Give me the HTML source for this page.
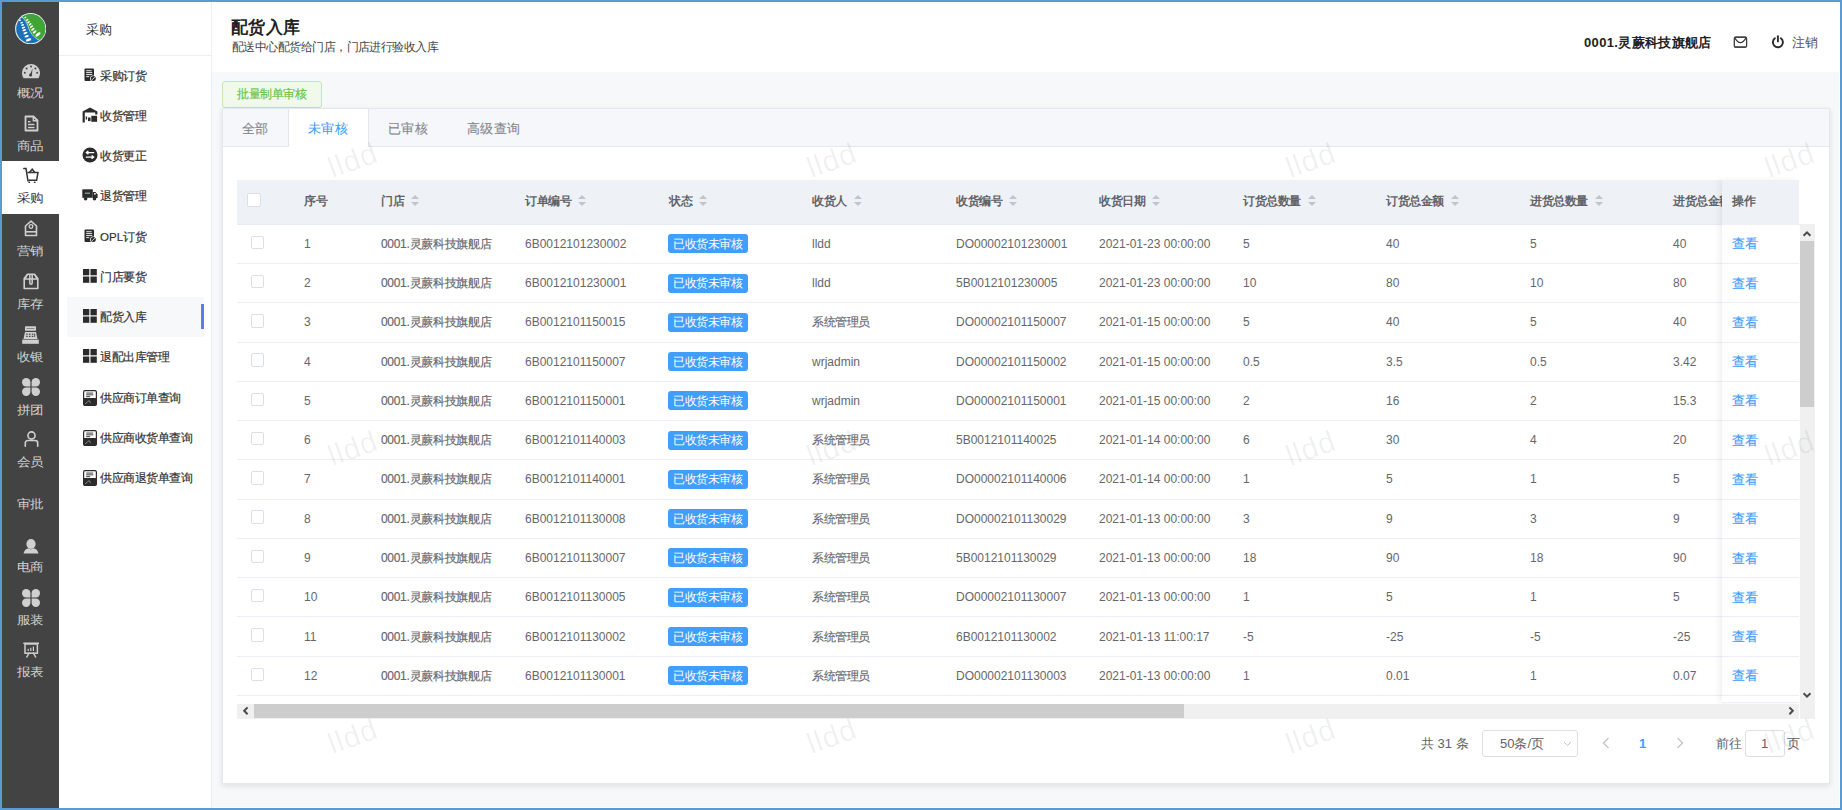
<!DOCTYPE html><html><head><meta charset="utf-8"><style>
*{box-sizing:border-box}
html,body{margin:0;padding:0}
body{width:1842px;height:810px;overflow:hidden;position:relative;background:#5b9bd5;font-family:"Liberation Sans",sans-serif;}
.abs{position:absolute}
.s{transform:scale(.96);transform-origin:0 0}
.t{position:absolute;white-space:nowrap;line-height:1}
#inner{position:absolute;left:2px;top:2px;width:1838px;height:806px;background:#fff}
#side{position:absolute;left:2px;top:2px;width:57px;height:806px;background:#434343}
.si{position:absolute;left:2px;width:57px;height:53px}
.si .lb{position:absolute;left:0;width:57px;text-align:center;font-size:14px;color:#cfcfcf;line-height:1}
.si.act{background:#fff}
.si.act .lb{color:#333}
#sub{position:absolute;left:59px;top:2px;width:153px;height:806px;background:#fff;border-right:1px solid #eceef2}
.mi{position:absolute;left:100px;font-size:12px;color:#333;line-height:1;white-space:nowrap;-webkit-text-stroke:0.2px #333}
.mic{position:absolute;left:83px}
#hdr{position:absolute;left:212px;top:2px;width:1627px;height:70px;background:#fff}
#main{position:absolute;left:212px;top:72px;width:1627px;height:735px;background:#f7f8fa}
#card{position:absolute;left:222px;top:108px;width:1608px;height:676px;background:#fff;border:1px solid #e4e7ed;box-shadow:0 2px 6px rgba(0,0,0,.10)}
.th{position:absolute;font-size:12px;font-weight:bold;color:#606266;line-height:1;white-space:nowrap}
.td{position:absolute;font-size:12px;color:#65676b;line-height:1;white-space:nowrap}
.cs{-webkit-text-stroke:0.15px currentColor}
.sc{position:absolute;width:10px;height:12px}
.sc i{position:absolute;left:0;width:0;height:0;border-left:4.7px solid transparent;border-right:4.7px solid transparent}
.sc .up{top:0;border-bottom:4.6px solid #c0c4cc}
.sc .dn{top:6.6px;border-top:4.7px solid #c0c4cc}
.cb{position:absolute;width:13.5px;height:13.5px;border:1px solid #dcdfe6;border-radius:2px;background:#fff}
.tag{position:absolute;height:19px;width:80.2px;background:#409eff;border-radius:3px;color:#fff;font-size:12px;line-height:20px;text-align:center;white-space:nowrap}
.rl{position:absolute;height:1px;background:#ebeef5}
.lk{position:absolute;font-size:14px;color:#409eff;line-height:1;white-space:nowrap;-webkit-text-stroke:0.15px #409eff}
.wm{position:absolute;font-size:30px;letter-spacing:1px;color:rgba(0,0,0,0.062);transform:rotate(-20deg);transform-origin:0 0;line-height:1;white-space:nowrap;pointer-events:none}
</style></head><body>
<div id="inner"></div>
<div id="side"></div>
<svg class="abs" style="left:14.8px;top:13px" width="31.4" height="31.4" viewBox="0 0 31.4 31.4">
<circle cx="15.7" cy="15.7" r="15.6" fill="#e6eee6"/>
<circle cx="15.7" cy="15.7" r="14.5" fill="#1b70ba"/>
<path d="M7.0 4.0 C9.8 6.5 11.7 9.4 12.7 12.5 C14 16.5 15.5 20.5 19.7 24.2 C21.2 25.5 22.6 26.5 24.5 27.3 A14.5 14.5 0 1 0 7.0 4.0 Z" fill="#40a535"/>
<path d="M7.0 4.0 C9.8 6.5 11.7 9.4 12.7 12.5 C14 16.5 15.5 20.5 19.7 24.2 C21.2 25.5 22.6 26.5 24.5 27.3" fill="none" stroke="#fff" stroke-width="0.6"/>
<g fill="#fff"><ellipse cx="10.35" cy="4.5" rx="1.2" ry="0.7" transform="rotate(-38 10.35 4.5)"/><ellipse cx="12.2" cy="6.86" rx="1.4" ry="0.75" transform="rotate(-38 12.2 6.86)"/><ellipse cx="13.6" cy="9.2" rx="1.55" ry="0.8" transform="rotate(-38 13.6 9.2)"/><ellipse cx="15.0" cy="11.3" rx="1.7" ry="0.85" transform="rotate(-38 15.0 11.3)"/><ellipse cx="16.45" cy="13.6" rx="1.85" ry="0.9" transform="rotate(-38 16.45 13.6)"/><ellipse cx="17.9" cy="16.3" rx="2.0" ry="0.95" transform="rotate(-38 17.9 16.3)"/><ellipse cx="19.6" cy="18.9" rx="2.2" ry="1.0" transform="rotate(-38 19.6 18.9)"/><ellipse cx="23.0" cy="21.4" rx="3.0" ry="1.4" transform="rotate(-38 23.0 21.4)"/><ellipse cx="5.0" cy="7.3" rx="1.1" ry="0.65" transform="rotate(-18 5.0 7.3)"/><ellipse cx="6.6" cy="9.7" rx="1.4" ry="0.75" transform="rotate(-18 6.6 9.7)"/><ellipse cx="7.6" cy="12.0" rx="1.6" ry="0.8" transform="rotate(-18 7.6 12.0)"/><ellipse cx="8.5" cy="14.6" rx="1.8" ry="0.85" transform="rotate(-18 8.5 14.6)"/><ellipse cx="9.3" cy="17.2" rx="1.95" ry="0.9" transform="rotate(-18 9.3 17.2)"/><ellipse cx="10.5" cy="20.0" rx="2.1" ry="0.95" transform="rotate(-18 10.5 20.0)"/><ellipse cx="11.7" cy="23.3" rx="2.2" ry="1.0" transform="rotate(-18 11.7 23.3)"/><ellipse cx="13.6" cy="26.8" rx="2.8" ry="1.3" transform="rotate(-18 13.6 26.8)"/></g>
</svg>
<div class="si" style="top:55px"></div>
<div class="si" style="top:107.5px"></div>
<div class="si act" style="top:160.5px"></div>
<div class="si" style="top:214px"></div>
<div class="si" style="top:267px"></div>
<div class="si" style="top:320px"></div>
<div class="si" style="top:373px"></div>
<div class="si" style="top:426px"></div>
<div class="si" style="top:479px"></div>
<div class="si" style="top:532px"></div>
<div class="si" style="top:585px"></div>
<div class="si" style="top:638px"></div>
<div class="t" style="left:17px;top:87px;font-size:14px;color:#d2d2d2;transform:scale(.96,.85);transform-origin:0 0">概况</div>
<div class="t" style="left:17px;top:140px;font-size:14px;color:#d2d2d2;transform:scale(.96,.85);transform-origin:0 0">商品</div>
<div class="t" style="left:17px;top:192px;font-size:14px;color:#333;transform:scale(.96,.85);transform-origin:0 0">采购</div>
<div class="t" style="left:17px;top:245px;font-size:14px;color:#d2d2d2;transform:scale(.96,.85);transform-origin:0 0">营销</div>
<div class="t" style="left:17px;top:298px;font-size:14px;color:#d2d2d2;transform:scale(.96,.85);transform-origin:0 0">库存</div>
<div class="t" style="left:17px;top:351px;font-size:14px;color:#d2d2d2;transform:scale(.96,.85);transform-origin:0 0">收银</div>
<div class="t" style="left:17px;top:404px;font-size:14px;color:#d2d2d2;transform:scale(.96,.85);transform-origin:0 0">拼团</div>
<div class="t" style="left:17px;top:456px;font-size:14px;color:#d2d2d2;transform:scale(.96,.85);transform-origin:0 0">会员</div>
<div class="t" style="left:17px;top:498px;font-size:14px;color:#d2d2d2;transform:scale(.96,.85);transform-origin:0 0">审批</div>
<div class="t" style="left:17px;top:561px;font-size:14px;color:#d2d2d2;transform:scale(.96,.85);transform-origin:0 0">电商</div>
<div class="t" style="left:17px;top:614px;font-size:14px;color:#d2d2d2;transform:scale(.96,.85);transform-origin:0 0">服装</div>
<div class="t" style="left:17px;top:666px;font-size:14px;color:#d2d2d2;transform:scale(.96,.85);transform-origin:0 0">报表</div>
<div id="sub"></div>
<div class="abs" style="left:59px;top:55px;width:152px;height:1px;background:#eceef2"></div>
<div class="t s" style="left:86px;top:22px;font-size:14px;color:#333">采购</div>
<div class="mi s" style="top:69.5px">采购订货</div>
<div class="mi s" style="top:109.75px">收货管理</div>
<div class="mi s" style="top:150.0px">收货更正</div>
<div class="mi s" style="top:190.25px">退货管理</div>
<div class="mi s" style="top:230.5px">OPL订货</div>
<div class="mi s" style="top:270.75px">门店要货</div>
<div class="abs" style="left:67px;top:297px;width:137px;height:40px;background:#f7f8fa"></div>
<div class="abs" style="left:201px;top:304px;width:3px;height:25px;background:#5a7cf0"></div>
<div class="mi s" style="top:311.0px">配货入库</div>
<div class="mi s" style="top:351.25px">退配出库管理</div>
<div class="mi s" style="top:391.5px">供应商订单查询</div>
<div class="mi s" style="top:431.75px">供应商收货单查询</div>
<div class="mi s" style="top:472.0px">供应商退货单查询</div>
<div id="hdr"></div>
<div class="t s" style="left:231px;top:18.5px;font-size:18px;font-weight:bold;color:#222">配货入库</div>
<div class="t" style="left:232px;top:40.5px;font-size:12px;letter-spacing:-0.55px;color:#444">配送中心配货给门店，门店进行验收入库</div>
<div class="t" style="left:1584px;top:36px;font-size:13px;letter-spacing:0.35px;font-weight:bold;color:#222">0001.灵蕨科技旗舰店</div>
<div class="t s" style="left:1792px;top:35px;font-size:14px;color:#555">注销</div>
<div id="main"></div>
<div class="abs" style="left:222px;top:81px;width:100px;height:27px;background:#f0f9eb;border:1px solid #c2e7b0;border-radius:3px"></div>
<div class="t s" style="left:237px;top:88px;font-size:12px;color:#67c23a;-webkit-text-stroke:0.15px #67c23a">批量制单审核</div>
<div id="card"></div>
<div class="abs" style="left:223px;top:109px;width:1606px;height:38px;background:#f5f7fa;border-bottom:1px solid #e4e7ed"></div>
<div class="abs" style="left:288px;top:109px;width:81px;height:37.5px;background:#fff;border-left:1px solid #e4e7ed;border-right:1px solid #e4e7ed"></div>
<div class="abs" style="left:289px;top:146px;width:79px;height:1px;background:#fff"></div>
<div class="t s" style="left:242px;top:120.5px;font-size:14px;color:#85888e;-webkit-text-stroke:0.15px #85888e">全部</div>
<div class="t s" style="left:308px;top:120.5px;font-size:14px;color:#409eff;-webkit-text-stroke:0.1px #409eff">未审核</div>
<div class="t s" style="left:388px;top:120.5px;font-size:14px;color:#85888e;-webkit-text-stroke:0.15px #85888e">已审核</div>
<div class="t s" style="left:467px;top:120.5px;font-size:14px;color:#85888e;-webkit-text-stroke:0.15px #85888e">高级查询</div>
<div class="abs" style="left:237px;top:180.3px;width:1562px;height:44.4px;background:#eef1f6"></div>
<div class="abs" style="left:237px;top:223.7px;width:1578px;height:1px;background:#e6eaf3"></div>
<div class="cb" style="left:247.1px;top:193.3px"></div>
<div class="th s" style="left:304px;top:194.7px">序号</div>
<div class="th s" style="left:381px;top:194.7px">门店</div>
<div class="sc" style="left:411.04px;top:195.4px"><i class="up"></i><i class="dn"></i></div>
<div class="th s" style="left:525px;top:194.7px">订单编号</div>
<div class="sc" style="left:578.08px;top:195.4px"><i class="up"></i><i class="dn"></i></div>
<div class="th s" style="left:669px;top:194.7px">状态</div>
<div class="sc" style="left:699.04px;top:195.4px"><i class="up"></i><i class="dn"></i></div>
<div class="th s" style="left:812px;top:194.7px">收货人</div>
<div class="sc" style="left:853.56px;top:195.4px"><i class="up"></i><i class="dn"></i></div>
<div class="th s" style="left:956px;top:194.7px">收货编号</div>
<div class="sc" style="left:1009.08px;top:195.4px"><i class="up"></i><i class="dn"></i></div>
<div class="th s" style="left:1099px;top:194.7px">收货日期</div>
<div class="sc" style="left:1152.08px;top:195.4px"><i class="up"></i><i class="dn"></i></div>
<div class="th s" style="left:1243px;top:194.7px">订货总数量</div>
<div class="sc" style="left:1307.6px;top:195.4px"><i class="up"></i><i class="dn"></i></div>
<div class="th s" style="left:1386px;top:194.7px">订货总金额</div>
<div class="sc" style="left:1450.6px;top:195.4px"><i class="up"></i><i class="dn"></i></div>
<div class="th s" style="left:1530px;top:194.7px">进货总数量</div>
<div class="sc" style="left:1594.6px;top:195.4px"><i class="up"></i><i class="dn"></i></div>
<div class="th s" style="left:1673px;top:194.7px">进货总金额</div>
<div class="sc" style="left:1737.6px;top:195.4px"><i class="up"></i><i class="dn"></i></div>
<div class="rl" style="left:237px;top:262.97px;width:1485px"></div>
<div class="cb" style="left:250.8px;top:235.53px"></div>
<div class="td" style="left:304px;top:237.83px">1</div>
<div class="td cs" style="left:381px;top:237.83px;letter-spacing:-0.3px">0001.灵蕨科技旗舰店</div>
<div class="td" style="left:525px;top:237.83px">6B0012101230002</div>
<div class="tag" style="left:668.3px;top:234.23px"></div>
<div class="t s" style="left:673.3px;top:237.83px;font-size:12px;color:#fff">已收货未审核</div>
<div class="td" style="left:812px;top:237.83px">lldd</div>
<div class="td" style="left:956px;top:237.83px">DO00002101230001</div>
<div class="td" style="left:1099px;top:237.83px">2021-01-23 00:00:00</div>
<div class="td" style="left:1243px;top:237.83px">5</div>
<div class="td" style="left:1386px;top:237.83px">40</div>
<div class="td" style="left:1530px;top:237.83px">5</div>
<div class="td" style="left:1673px;top:237.83px">40</div>
<div class="rl" style="left:237px;top:302.24px;width:1485px"></div>
<div class="cb" style="left:250.8px;top:274.80px"></div>
<div class="td" style="left:304px;top:277.10px">2</div>
<div class="td cs" style="left:381px;top:277.10px;letter-spacing:-0.3px">0001.灵蕨科技旗舰店</div>
<div class="td" style="left:525px;top:277.10px">6B0012101230001</div>
<div class="tag" style="left:668.3px;top:273.50px"></div>
<div class="t s" style="left:673.3px;top:277.10px;font-size:12px;color:#fff">已收货未审核</div>
<div class="td" style="left:812px;top:277.10px">lldd</div>
<div class="td" style="left:956px;top:277.10px">5B0012101230005</div>
<div class="td" style="left:1099px;top:277.10px">2021-01-23 00:00:00</div>
<div class="td" style="left:1243px;top:277.10px">10</div>
<div class="td" style="left:1386px;top:277.10px">80</div>
<div class="td" style="left:1530px;top:277.10px">10</div>
<div class="td" style="left:1673px;top:277.10px">80</div>
<div class="rl" style="left:237px;top:341.51px;width:1485px"></div>
<div class="cb" style="left:250.8px;top:314.07px"></div>
<div class="td" style="left:304px;top:316.38px">3</div>
<div class="td cs" style="left:381px;top:316.38px;letter-spacing:-0.3px">0001.灵蕨科技旗舰店</div>
<div class="td" style="left:525px;top:316.38px">6B0012101150015</div>
<div class="tag" style="left:668.3px;top:312.77px"></div>
<div class="t s" style="left:673.3px;top:316.38px;font-size:12px;color:#fff">已收货未审核</div>
<div class="td s cs" style="left:812px;top:316.38px">系统管理员</div>
<div class="td" style="left:956px;top:316.38px">DO00002101150007</div>
<div class="td" style="left:1099px;top:316.38px">2021-01-15 00:00:00</div>
<div class="td" style="left:1243px;top:316.38px">5</div>
<div class="td" style="left:1386px;top:316.38px">40</div>
<div class="td" style="left:1530px;top:316.38px">5</div>
<div class="td" style="left:1673px;top:316.38px">40</div>
<div class="rl" style="left:237px;top:380.78px;width:1485px"></div>
<div class="cb" style="left:250.8px;top:353.34px"></div>
<div class="td" style="left:304px;top:355.64px">4</div>
<div class="td cs" style="left:381px;top:355.64px;letter-spacing:-0.3px">0001.灵蕨科技旗舰店</div>
<div class="td" style="left:525px;top:355.64px">6B0012101150007</div>
<div class="tag" style="left:668.3px;top:352.04px"></div>
<div class="t s" style="left:673.3px;top:355.64px;font-size:12px;color:#fff">已收货未审核</div>
<div class="td" style="left:812px;top:355.64px">wrjadmin</div>
<div class="td" style="left:956px;top:355.64px">DO00002101150002</div>
<div class="td" style="left:1099px;top:355.64px">2021-01-15 00:00:00</div>
<div class="td" style="left:1243px;top:355.64px">0.5</div>
<div class="td" style="left:1386px;top:355.64px">3.5</div>
<div class="td" style="left:1530px;top:355.64px">0.5</div>
<div class="td" style="left:1673px;top:355.64px">3.42</div>
<div class="rl" style="left:237px;top:420.05px;width:1485px"></div>
<div class="cb" style="left:250.8px;top:392.61px"></div>
<div class="td" style="left:304px;top:394.91px">5</div>
<div class="td cs" style="left:381px;top:394.91px;letter-spacing:-0.3px">0001.灵蕨科技旗舰店</div>
<div class="td" style="left:525px;top:394.91px">6B0012101150001</div>
<div class="tag" style="left:668.3px;top:391.31px"></div>
<div class="t s" style="left:673.3px;top:394.91px;font-size:12px;color:#fff">已收货未审核</div>
<div class="td" style="left:812px;top:394.91px">wrjadmin</div>
<div class="td" style="left:956px;top:394.91px">DO00002101150001</div>
<div class="td" style="left:1099px;top:394.91px">2021-01-15 00:00:00</div>
<div class="td" style="left:1243px;top:394.91px">2</div>
<div class="td" style="left:1386px;top:394.91px">16</div>
<div class="td" style="left:1530px;top:394.91px">2</div>
<div class="td" style="left:1673px;top:394.91px">15.3</div>
<div class="rl" style="left:237px;top:459.32px;width:1485px"></div>
<div class="cb" style="left:250.8px;top:431.88px"></div>
<div class="td" style="left:304px;top:434.19px">6</div>
<div class="td cs" style="left:381px;top:434.19px;letter-spacing:-0.3px">0001.灵蕨科技旗舰店</div>
<div class="td" style="left:525px;top:434.19px">6B0012101140003</div>
<div class="tag" style="left:668.3px;top:430.58px"></div>
<div class="t s" style="left:673.3px;top:434.19px;font-size:12px;color:#fff">已收货未审核</div>
<div class="td s cs" style="left:812px;top:434.19px">系统管理员</div>
<div class="td" style="left:956px;top:434.19px">5B0012101140025</div>
<div class="td" style="left:1099px;top:434.19px">2021-01-14 00:00:00</div>
<div class="td" style="left:1243px;top:434.19px">6</div>
<div class="td" style="left:1386px;top:434.19px">30</div>
<div class="td" style="left:1530px;top:434.19px">4</div>
<div class="td" style="left:1673px;top:434.19px">20</div>
<div class="rl" style="left:237px;top:498.59px;width:1485px"></div>
<div class="cb" style="left:250.8px;top:471.15px"></div>
<div class="td" style="left:304px;top:473.45px">7</div>
<div class="td cs" style="left:381px;top:473.45px;letter-spacing:-0.3px">0001.灵蕨科技旗舰店</div>
<div class="td" style="left:525px;top:473.45px">6B0012101140001</div>
<div class="tag" style="left:668.3px;top:469.85px"></div>
<div class="t s" style="left:673.3px;top:473.45px;font-size:12px;color:#fff">已收货未审核</div>
<div class="td s cs" style="left:812px;top:473.45px">系统管理员</div>
<div class="td" style="left:956px;top:473.45px">DO00002101140006</div>
<div class="td" style="left:1099px;top:473.45px">2021-01-14 00:00:00</div>
<div class="td" style="left:1243px;top:473.45px">1</div>
<div class="td" style="left:1386px;top:473.45px">5</div>
<div class="td" style="left:1530px;top:473.45px">1</div>
<div class="td" style="left:1673px;top:473.45px">5</div>
<div class="rl" style="left:237px;top:537.86px;width:1485px"></div>
<div class="cb" style="left:250.8px;top:510.43px"></div>
<div class="td" style="left:304px;top:512.73px">8</div>
<div class="td cs" style="left:381px;top:512.73px;letter-spacing:-0.3px">0001.灵蕨科技旗舰店</div>
<div class="td" style="left:525px;top:512.73px">6B0012101130008</div>
<div class="tag" style="left:668.3px;top:509.12px"></div>
<div class="t s" style="left:673.3px;top:512.73px;font-size:12px;color:#fff">已收货未审核</div>
<div class="td s cs" style="left:812px;top:512.73px">系统管理员</div>
<div class="td" style="left:956px;top:512.73px">DO00002101130029</div>
<div class="td" style="left:1099px;top:512.73px">2021-01-13 00:00:00</div>
<div class="td" style="left:1243px;top:512.73px">3</div>
<div class="td" style="left:1386px;top:512.73px">9</div>
<div class="td" style="left:1530px;top:512.73px">3</div>
<div class="td" style="left:1673px;top:512.73px">9</div>
<div class="rl" style="left:237px;top:577.13px;width:1485px"></div>
<div class="cb" style="left:250.8px;top:549.70px"></div>
<div class="td" style="left:304px;top:552.00px">9</div>
<div class="td cs" style="left:381px;top:552.00px;letter-spacing:-0.3px">0001.灵蕨科技旗舰店</div>
<div class="td" style="left:525px;top:552.00px">6B0012101130007</div>
<div class="tag" style="left:668.3px;top:548.39px"></div>
<div class="t s" style="left:673.3px;top:552.00px;font-size:12px;color:#fff">已收货未审核</div>
<div class="td s cs" style="left:812px;top:552.00px">系统管理员</div>
<div class="td" style="left:956px;top:552.00px">5B0012101130029</div>
<div class="td" style="left:1099px;top:552.00px">2021-01-13 00:00:00</div>
<div class="td" style="left:1243px;top:552.00px">18</div>
<div class="td" style="left:1386px;top:552.00px">90</div>
<div class="td" style="left:1530px;top:552.00px">18</div>
<div class="td" style="left:1673px;top:552.00px">90</div>
<div class="rl" style="left:237px;top:616.40px;width:1485px"></div>
<div class="cb" style="left:250.8px;top:588.97px"></div>
<div class="td" style="left:304px;top:591.26px">10</div>
<div class="td cs" style="left:381px;top:591.26px;letter-spacing:-0.3px">0001.灵蕨科技旗舰店</div>
<div class="td" style="left:525px;top:591.26px">6B0012101130005</div>
<div class="tag" style="left:668.3px;top:587.66px"></div>
<div class="t s" style="left:673.3px;top:591.26px;font-size:12px;color:#fff">已收货未审核</div>
<div class="td s cs" style="left:812px;top:591.26px">系统管理员</div>
<div class="td" style="left:956px;top:591.26px">DO00002101130007</div>
<div class="td" style="left:1099px;top:591.26px">2021-01-13 00:00:00</div>
<div class="td" style="left:1243px;top:591.26px">1</div>
<div class="td" style="left:1386px;top:591.26px">5</div>
<div class="td" style="left:1530px;top:591.26px">1</div>
<div class="td" style="left:1673px;top:591.26px">5</div>
<div class="rl" style="left:237px;top:655.67px;width:1485px"></div>
<div class="cb" style="left:250.8px;top:628.24px"></div>
<div class="td" style="left:304px;top:630.54px">11</div>
<div class="td cs" style="left:381px;top:630.54px;letter-spacing:-0.3px">0001.灵蕨科技旗舰店</div>
<div class="td" style="left:525px;top:630.54px">6B0012101130002</div>
<div class="tag" style="left:668.3px;top:626.94px"></div>
<div class="t s" style="left:673.3px;top:630.54px;font-size:12px;color:#fff">已收货未审核</div>
<div class="td s cs" style="left:812px;top:630.54px">系统管理员</div>
<div class="td" style="left:956px;top:630.54px">6B0012101130002</div>
<div class="td" style="left:1099px;top:630.54px">2021-01-13 11:00:17</div>
<div class="td" style="left:1243px;top:630.54px">-5</div>
<div class="td" style="left:1386px;top:630.54px">-25</div>
<div class="td" style="left:1530px;top:630.54px">-5</div>
<div class="td" style="left:1673px;top:630.54px">-25</div>
<div class="rl" style="left:237px;top:694.94px;width:1485px"></div>
<div class="cb" style="left:250.8px;top:667.51px"></div>
<div class="td" style="left:304px;top:669.81px">12</div>
<div class="td cs" style="left:381px;top:669.81px;letter-spacing:-0.3px">0001.灵蕨科技旗舰店</div>
<div class="td" style="left:525px;top:669.81px">6B0012101130001</div>
<div class="tag" style="left:668.3px;top:666.21px"></div>
<div class="t s" style="left:673.3px;top:669.81px;font-size:12px;color:#fff">已收货未审核</div>
<div class="td s cs" style="left:812px;top:669.81px">系统管理员</div>
<div class="td" style="left:956px;top:669.81px">DO00002101130003</div>
<div class="td" style="left:1099px;top:669.81px">2021-01-13 00:00:00</div>
<div class="td" style="left:1243px;top:669.81px">1</div>
<div class="td" style="left:1386px;top:669.81px">0.01</div>
<div class="td" style="left:1530px;top:669.81px">1</div>
<div class="td" style="left:1673px;top:669.81px">0.07</div>
<div class="abs" style="left:1722px;top:180.3px;width:77px;height:521.64px;background:#fff;box-shadow:-3px 0 6px rgba(0,0,0,.06)"></div>
<div class="abs" style="left:1722px;top:180.3px;width:77px;height:44.4px;background:#eef1f6"></div>
<div class="th s" style="left:1732px;top:194.9px">操作</div>
<div class="rl" style="left:1722px;top:262.97px;width:77px"></div>
<div class="lk s" style="left:1732px;top:236.33px">查看</div>
<div class="rl" style="left:1722px;top:302.24px;width:77px"></div>
<div class="lk s" style="left:1732px;top:275.60px">查看</div>
<div class="rl" style="left:1722px;top:341.51px;width:77px"></div>
<div class="lk s" style="left:1732px;top:314.88px">查看</div>
<div class="rl" style="left:1722px;top:380.78px;width:77px"></div>
<div class="lk s" style="left:1732px;top:354.14px">查看</div>
<div class="rl" style="left:1722px;top:420.05px;width:77px"></div>
<div class="lk s" style="left:1732px;top:393.41px">查看</div>
<div class="rl" style="left:1722px;top:459.32px;width:77px"></div>
<div class="lk s" style="left:1732px;top:432.69px">查看</div>
<div class="rl" style="left:1722px;top:498.59px;width:77px"></div>
<div class="lk s" style="left:1732px;top:471.95px">查看</div>
<div class="rl" style="left:1722px;top:537.86px;width:77px"></div>
<div class="lk s" style="left:1732px;top:511.23px">查看</div>
<div class="rl" style="left:1722px;top:577.13px;width:77px"></div>
<div class="lk s" style="left:1732px;top:550.50px">查看</div>
<div class="rl" style="left:1722px;top:616.40px;width:77px"></div>
<div class="lk s" style="left:1732px;top:589.76px">查看</div>
<div class="rl" style="left:1722px;top:655.67px;width:77px"></div>
<div class="lk s" style="left:1732px;top:629.04px">查看</div>
<div class="rl" style="left:1722px;top:694.94px;width:77px"></div>
<div class="lk s" style="left:1732px;top:668.31px">查看</div>
<div class="abs" style="left:1722px;top:702px;width:77px;height:1px;background:#eef0f5"></div>
<div class="abs" style="left:1800px;top:224px;width:15px;height:494.6px;background:#f0f0f0"></div>
<div class="abs" style="left:1800px;top:241.3px;width:14px;height:165.6px;background:#cdcdcd"></div>
<div class="abs" style="left:237.4px;top:704px;width:1561.4px;height:14.6px;background:#f0f0f0"></div>
<div class="abs" style="left:254px;top:704px;width:930px;height:13.7px;background:#cdcdcd"></div>
<div class="t" style="left:1421px;top:737px;font-size:13px;color:#606266">共 31 条</div>
<div class="abs" style="left:1482px;top:730px;width:96px;height:27px;border:1px solid #dcdfe6;border-radius:3px;background:#fff"></div>
<div class="t" style="left:1500px;top:737px;font-size:13px;color:#606266">50条/页</div>
<div class="t" style="left:1639px;top:737px;font-size:13px;font-weight:bold;color:#409eff">1</div>
<div class="t" style="left:1716px;top:737px;font-size:13px;color:#606266">前往</div>
<div class="abs" style="left:1745px;top:730px;width:40px;height:27px;border:1px solid #dcdfe6;border-radius:3px;background:#fff"></div>
<div class="t" style="left:1761px;top:737px;font-size:13px;color:#606266">1</div>
<div class="t" style="left:1787px;top:737px;font-size:13px;color:#606266">页</div>
<svg class="abs" style="left:21.5px;top:64px" width="18" height="15" viewBox="0 0 18 15"><path d="M1.6 14.2 A9 9 0 1 1 16.4 14.2 Z" fill="#d0d0d0"/><circle cx="9" cy="2.6" r="1" fill="#434343"/><circle cx="4.6" cy="4.6" r="1" fill="#434343"/><circle cx="13.4" cy="4.6" r="1" fill="#434343"/><circle cx="2.8" cy="8.8" r="1" fill="#434343"/><circle cx="15.2" cy="8.8" r="1" fill="#434343"/><circle cx="8.6" cy="11" r="1.6" fill="#434343"/><path d="M7.9 11 L10.5 4.6 L9.9 11.3Z" fill="#434343"/></svg>
<svg class="abs" style="left:23.5px;top:114.5px" width="15" height="17" viewBox="0 0 15 17"><path d="M1.5 1.5 H9.5 L13.5 5.5 V15.5 H1.5 Z" fill="none" stroke="#d0d0d0" stroke-width="1.8" stroke-linejoin="round"/><path d="M9.3 1.8 V5.7 H13.2" fill="none" stroke="#d0d0d0" stroke-width="1.4"/><rect x="4" y="6" width="2.5" height="1.4" fill="#d0d0d0"/><rect x="4" y="8.8" width="6.5" height="1.4" fill="#d0d0d0"/><rect x="4" y="11.8" width="6.5" height="1.4" fill="#d0d0d0"/></svg>
<svg class="abs" style="left:23px;top:167px" width="16" height="16" viewBox="0 0 16 16"><path d="M0.8 1.6 H3 L5 14" fill="none" stroke="#333" stroke-width="1.5" stroke-linecap="round"/><path d="M4.4 5.5 H15 L13.6 13.3 H5.3" fill="none" stroke="#333" stroke-width="1.5" stroke-linejoin="round"/><path d="M6.5 5.5 L9.2 2.2 L11.8 5.5" fill="none" stroke="#333" stroke-width="1.5"/><circle cx="6.3" cy="15.3" r="0.9" fill="#333"/><circle cx="11.7" cy="15.3" r="0.9" fill="#333"/></svg>
<svg class="abs" style="left:24px;top:219.5px" width="14" height="17" viewBox="0 0 14 17"><path d="M1.5 15.5 V6 L7 1.2 L12.5 6 V15.5 Z" fill="none" stroke="#d0d0d0" stroke-width="1.6" stroke-linejoin="round"/><circle cx="7" cy="6.5" r="1.8" fill="none" stroke="#d0d0d0" stroke-width="1.3"/><rect x="1.5" y="11" width="11" height="1.6" fill="#d0d0d0"/></svg>
<svg class="abs" style="left:23px;top:272.5px" width="16" height="17" viewBox="0 0 16 17"><path d="M1.2 15.5 V5.5 L4.5 1.2 H11.5 L14.8 5.5 V15.5 Z" fill="none" stroke="#d0d0d0" stroke-width="1.6" stroke-linejoin="round"/><path d="M1.2 6 H14.8" stroke="#d0d0d0" stroke-width="1.5"/><path d="M4.5 1.5 L2 6 M11.5 1.5 L14 6" stroke="#d0d0d0" stroke-width="1.2"/><path d="M6.8 1.5 V10 A1.2 1.2 0 0 0 9.2 10 V1.5" fill="none" stroke="#d0d0d0" stroke-width="1.5"/></svg>
<svg class="abs" style="left:22px;top:325.5px" width="17" height="18" viewBox="0 0 17 18"><rect x="3" y="0.3" width="11" height="4.5" rx="0.5" fill="#d0d0d0"/><rect x="4.5" y="2" width="8" height="1" fill="#8a8a8a"/><path d="M3 6 H14 L15.5 13 H1.5 Z" fill="#d0d0d0"/><rect x="0.2" y="13.6" width="16.6" height="4.2" fill="#d0d0d0"/><g fill="#434343"><rect x="4.2" y="7.6" width="1.5" height="1.2"/><rect x="7" y="7.6" width="1.5" height="1.2"/><rect x="9.8" y="7.6" width="1.5" height="1.2"/><rect x="4.2" y="9.8" width="1.5" height="1.2"/><rect x="7" y="9.8" width="1.5" height="1.2"/><rect x="9.8" y="9.8" width="1.5" height="1.2"/><rect x="12.2" y="7.6" width="0.9" height="3.4"/></g></svg>
<svg class="abs" style="left:21.6px;top:378px" width="18" height="18" viewBox="0 0 18 18"><g fill="#d0d0d0"><path d="M8.4 8.4 H4.2 A4.2 4.2 0 1 1 8.4 4.2 Z"/><path d="M9.6 8.4 H13.8 A4.2 4.2 0 1 0 9.6 4.2 Z"/><path d="M8.4 9.6 H4.2 A4.2 4.2 0 1 0 8.4 13.8 Z"/><path d="M9.6 9.6 H13.8 A4.2 4.2 0 1 1 9.6 13.8 Z"/></g></svg>
<svg class="abs" style="left:23.5px;top:430.5px" width="15" height="16" viewBox="0 0 15 16"><circle cx="7.5" cy="4.5" r="3.6" fill="none" stroke="#d0d0d0" stroke-width="1.6"/><path d="M1.3 15.2 V12 A2.5 2.5 0 0 1 3.8 9.5 H11.2 A2.5 2.5 0 0 1 13.7 12 V15.2" fill="none" stroke="#d0d0d0" stroke-width="1.6" stroke-linecap="round"/></svg>
<svg class="abs" style="left:22.5px;top:538.5px" width="16" height="15" viewBox="0 0 16 15"><ellipse cx="8" cy="5" rx="4.6" ry="4.9" fill="#d0d0d0"/><path d="M0.5 14.6 Q1.5 9.8 6 9.3 L8 10.4 L10 9.3 Q14.5 9.8 15.5 14.6 Z" fill="#d0d0d0"/></svg>
<svg class="abs" style="left:21.6px;top:588.5px" width="18" height="18" viewBox="0 0 18 18"><g fill="#d0d0d0"><path d="M8.4 8.4 H4.2 A4.2 4.2 0 1 1 8.4 4.2 Z"/><path d="M9.6 8.4 H13.8 A4.2 4.2 0 1 0 9.6 4.2 Z"/><path d="M8.4 9.6 H4.2 A4.2 4.2 0 1 0 8.4 13.8 Z"/><path d="M9.6 9.6 H13.8 A4.2 4.2 0 1 1 9.6 13.8 Z"/></g></svg>
<svg class="abs" style="left:22.5px;top:642px" width="16.5" height="15.5" viewBox="0 0 16.5 15.5"><rect x="0.2" y="0.5" width="16" height="1.6" rx="0.6" fill="#d0d0d0"/><rect x="2" y="2" width="12.4" height="9.2" fill="none" stroke="#d0d0d0" stroke-width="1.5"/><path d="M6 11 L3.8 15 M10.4 11 L12.6 15" stroke="#d0d0d0" stroke-width="1.5" stroke-linecap="round"/><rect x="4.6" y="6.8" width="1.2" height="2.2" fill="#d0d0d0"/><rect x="7.2" y="5.8" width="1.2" height="3.2" fill="#d0d0d0"/><rect x="9.8" y="4.6" width="1.2" height="4.4" fill="#d0d0d0"/></svg>
<svg class="abs" style="left:83.5px;top:67.5px" width="13" height="14" viewBox="0 0 13 14"><rect x="0.5" y="0.5" width="9.5" height="12.5" rx="1" fill="#2b2b2b"/><g fill="#fff"><rect x="2.2" y="2.3" width="5.5" height="0.9"/><rect x="2.2" y="4.2" width="6" height="0.9"/><rect x="2.2" y="6.2" width="6" height="0.9"/><rect x="2.2" y="8.2" width="3" height="0.9"/></g><circle cx="9.3" cy="10.6" r="3.2" fill="#fff"/><circle cx="9.3" cy="10.6" r="2.5" fill="#2b2b2b"/><path d="M8 11.9 L10.8 9.1" stroke="#fff" stroke-width="0.8"/></svg>
<svg class="abs" style="left:83.5px;top:228.5px" width="13" height="14" viewBox="0 0 13 14"><rect x="0.5" y="0.5" width="9.5" height="12.5" rx="1" fill="#2b2b2b"/><g fill="#fff"><rect x="2.2" y="2.3" width="5.5" height="0.9"/><rect x="2.2" y="4.2" width="6" height="0.9"/><rect x="2.2" y="6.2" width="6" height="0.9"/><rect x="2.2" y="8.2" width="3" height="0.9"/></g><circle cx="9.3" cy="10.6" r="3.2" fill="#fff"/><circle cx="9.3" cy="10.6" r="2.5" fill="#2b2b2b"/><path d="M8 11.9 L10.8 9.1" stroke="#fff" stroke-width="0.8"/></svg>
<svg class="abs" style="left:82px;top:107px" width="16" height="16" viewBox="0 0 16 16"><path d="M0.6 15.4 V4.5 L8 0.6 L15.4 4.5 V7.5 H13.2 V5.6 H2.8 V15.4 Z" fill="#2b2b2b"/><rect x="3.7" y="9.5" width="1.4" height="3" fill="#2b2b2b"/><rect x="6" y="10.5" width="2.6" height="3.6" fill="#2b2b2b"/><rect x="9.3" y="8.8" width="5.8" height="6" fill="#2b2b2b"/></svg>
<svg class="abs" style="left:82px;top:147px" width="16" height="16" viewBox="0 0 16 16"><circle cx="8" cy="8" r="7.5" fill="#2b2b2b"/><path d="M12.2 5.6 H4.8 M6.4 3.9 L4.3 5.6 L6.4 7.3" fill="none" stroke="#fff" stroke-width="1.3"/><path d="M3.8 10.1 H11.2 M9.6 8.4 L11.7 10.1 L9.6 11.8" fill="none" stroke="#fff" stroke-width="1.3"/></svg>
<svg class="abs" style="left:82px;top:189px" width="16" height="12" viewBox="0 0 16 12"><rect x="0.3" y="0.3" width="10.5" height="8.5" fill="#2b2b2b"/><path d="M11 3 H13.5 L15.6 5.5 V9 H11 Z" fill="#2b2b2b"/><rect x="12" y="4" width="1.8" height="1.6" fill="#ddd"/><rect x="3" y="3.6" width="5" height="1.2" fill="#9aa"/><circle cx="3.6" cy="9.8" r="1.8" fill="#2b2b2b"/><circle cx="12.5" cy="9.8" r="1.8" fill="#2b2b2b"/></svg>
<svg class="abs" style="left:83.2px;top:268.95px" width="14" height="14" viewBox="0 0 14 14"><g fill="#2b2b2b"><rect x="0" y="0" width="6.3" height="6.3"/><rect x="7.5" y="0" width="6.3" height="6.3"/><rect x="0" y="7.5" width="6.3" height="6.3"/><rect x="7.5" y="7.5" width="6.3" height="6.3"/></g></svg>
<svg class="abs" style="left:83.2px;top:309.2px" width="14" height="14" viewBox="0 0 14 14"><g fill="#2b2b2b"><rect x="0" y="0" width="6.3" height="6.3"/><rect x="7.5" y="0" width="6.3" height="6.3"/><rect x="0" y="7.5" width="6.3" height="6.3"/><rect x="7.5" y="7.5" width="6.3" height="6.3"/></g></svg>
<svg class="abs" style="left:83.2px;top:349.45px" width="14" height="14" viewBox="0 0 14 14"><g fill="#2b2b2b"><rect x="0" y="0" width="6.3" height="6.3"/><rect x="7.5" y="0" width="6.3" height="6.3"/><rect x="0" y="7.5" width="6.3" height="6.3"/><rect x="7.5" y="7.5" width="6.3" height="6.3"/></g></svg>
<svg class="abs" style="left:83.2px;top:389.5px" width="14" height="16" viewBox="0 0 14 16"><rect x="0.6" y="0.6" width="12.8" height="14.8" rx="1.4" fill="none" stroke="#2b2b2b" stroke-width="1.2"/><rect x="0.6" y="8" width="12.8" height="7.4" rx="1" fill="#2b2b2b"/><g fill="#2b2b2b"><rect x="3.2" y="2.6" width="7" height="0.9"/><rect x="3.2" y="4.4" width="7" height="0.9"/><rect x="3.2" y="6.2" width="4" height="0.9"/></g><path d="M2 14 L6.2 10.5 L7.6 13.2" fill="none" stroke="#aab" stroke-width="0.7"/></svg>
<svg class="abs" style="left:83.2px;top:429.75px" width="14" height="16" viewBox="0 0 14 16"><rect x="0.6" y="0.6" width="12.8" height="14.8" rx="1.4" fill="none" stroke="#2b2b2b" stroke-width="1.2"/><rect x="0.6" y="8" width="12.8" height="7.4" rx="1" fill="#2b2b2b"/><g fill="#2b2b2b"><rect x="3.2" y="2.6" width="7" height="0.9"/><rect x="3.2" y="4.4" width="7" height="0.9"/><rect x="3.2" y="6.2" width="4" height="0.9"/></g><path d="M2 14 L6.2 10.5 L7.6 13.2" fill="none" stroke="#aab" stroke-width="0.7"/></svg>
<svg class="abs" style="left:83.2px;top:470.0px" width="14" height="16" viewBox="0 0 14 16"><rect x="0.6" y="0.6" width="12.8" height="14.8" rx="1.4" fill="none" stroke="#2b2b2b" stroke-width="1.2"/><rect x="0.6" y="8" width="12.8" height="7.4" rx="1" fill="#2b2b2b"/><g fill="#2b2b2b"><rect x="3.2" y="2.6" width="7" height="0.9"/><rect x="3.2" y="4.4" width="7" height="0.9"/><rect x="3.2" y="6.2" width="4" height="0.9"/></g><path d="M2 14 L6.2 10.5 L7.6 13.2" fill="none" stroke="#aab" stroke-width="0.7"/></svg>
<svg class="abs" style="left:1733px;top:36px" width="15" height="12.5" viewBox="0 0 15 12.5"><rect x="1.3" y="1.2" width="12.3" height="10" rx="1.5" fill="none" stroke="#3a3a3a" stroke-width="1.3"/><rect x="1.6" y="0.6" width="11.6" height="1.2" fill="#3a3a3a"/><rect x="1.6" y="10.5" width="11.6" height="1.2" fill="#3a3a3a"/><path d="M1.6 1.6 Q4.5 6.6 7.4 6.6 Q10.3 6.6 13.2 1.6" fill="none" stroke="#3a3a3a" stroke-width="1.1"/></svg>
<svg class="abs" style="left:1771px;top:35px" width="14" height="14" viewBox="0 0 14 14"><path d="M3.9 3.3 A5 5 0 1 0 9.9 3.3" fill="none" stroke="#2b2b2b" stroke-width="1.9" stroke-linecap="round"/><path d="M6.9 1.3 V6.4" stroke="#2b2b2b" stroke-width="1.9" stroke-linecap="round"/></svg>
<svg class="abs" style="left:1563px;top:739px" width="9" height="9" viewBox="0 0 9 9"><path d="M1 3 L4.5 6.5 L8 3" fill="none" stroke="#c0c4cc" stroke-width="1"/></svg>
<svg class="abs" style="left:1601px;top:736px" width="10" height="14" viewBox="0 0 10 14"><path d="M7.5 2 L2.5 7 L7.5 12" fill="none" stroke="#c0c4cc" stroke-width="1.3"/></svg>
<svg class="abs" style="left:1675px;top:736px" width="10" height="14" viewBox="0 0 10 14"><path d="M2.5 2 L7.5 7 L2.5 12" fill="none" stroke="#c0c4cc" stroke-width="1.3"/></svg>
<svg class="abs" style="left:1802px;top:229px" width="10" height="9" viewBox="0 0 10 9"><path d="M1.6 6.8 L5 3.4 L8.4 6.8" fill="none" stroke="#4a4a4a" stroke-width="2"/></svg>
<svg class="abs" style="left:1802px;top:690.5px" width="10" height="9" viewBox="0 0 10 9"><path d="M1.6 2.2 L5 5.6 L8.4 2.2" fill="none" stroke="#4a4a4a" stroke-width="2"/></svg>
<svg class="abs" style="left:241px;top:706px" width="9" height="10" viewBox="0 0 9 10"><path d="M6.6 1.4 L3.2 4.8 L6.6 8.2" fill="none" stroke="#4a4a4a" stroke-width="2"/></svg>
<svg class="abs" style="left:1786.5px;top:706px" width="9" height="10" viewBox="0 0 9 10"><path d="M2.4 1.4 L5.8 4.8 L2.4 8.2" fill="none" stroke="#4a4a4a" stroke-width="2"/></svg>
<div class="wm" style="left:324px;top:155px">lldd</div>
<div class="wm" style="left:803px;top:155px">lldd</div>
<div class="wm" style="left:1282px;top:155px">lldd</div>
<div class="wm" style="left:1761px;top:155px">lldd</div>
<div class="wm" style="left:324px;top:443px">lldd</div>
<div class="wm" style="left:803px;top:443px">lldd</div>
<div class="wm" style="left:1282px;top:443px">lldd</div>
<div class="wm" style="left:1761px;top:443px">lldd</div>
<div class="wm" style="left:324px;top:731px">lldd</div>
<div class="wm" style="left:803px;top:731px">lldd</div>
<div class="wm" style="left:1282px;top:731px">lldd</div>
<div class="wm" style="left:1761px;top:731px">lldd</div>
</body></html>
